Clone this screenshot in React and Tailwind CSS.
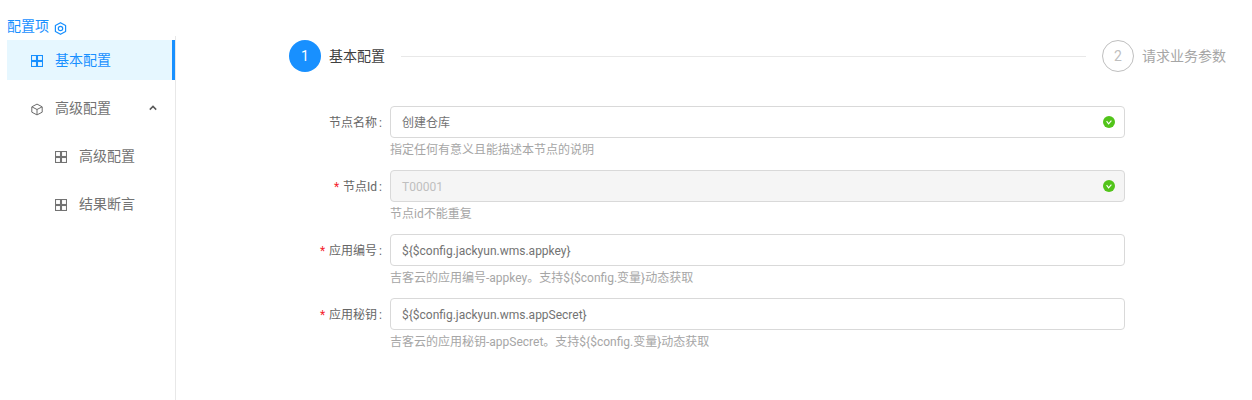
import React from "react";

const font = "font-['Roboto','Noto_Sans_CJK_SC',sans-serif]";

function GridIcon({ color = "#737373" }) {
  return (
    <svg width="12" height="12" viewBox="0 0 12 12" fill="none" stroke={color} strokeWidth="1.1">
      <rect x="0.5" y="0.5" width="5" height="5" />
      <rect x="6.5" y="0.5" width="5" height="5" />
      <rect x="0.5" y="6.5" width="5" height="5" />
      <rect x="6.5" y="6.5" width="5" height="5" />
    </svg>
  );
}

function CubeIcon() {
  return (
    <svg width="13" height="13" viewBox="0 0 12 12" fill="none" stroke="#6b6b6b" strokeWidth="1">
      <path d="M6 0.6 11.2 3.3V8.7L6 11.4 0.8 8.7V3.3Z" strokeLinejoin="round" />
      <path d="M1 3.4 6 6 11 3.4M6 6V11.2" />
    </svg>
  );
}

function CheckBadge() {
  return (
    <svg className="absolute right-[9px] top-[9px]" width="12" height="12" viewBox="0 0 12 12">
      <circle cx="6" cy="6" r="6" fill="#52c41a" />
      <path d="M3.6 5.2 5.6 7.8 8.4 4.6" fill="none" stroke="#fff" strokeWidth="1.1" />
    </svg>
  );
}

function MenuItem({ icon, label, active, indent, arrow }) {
  return (
    <div
      className={`relative flex h-10 items-center text-[14px] ${
        active ? "bg-[#e6f7ff] text-[#1890ff] border-r-[3px] border-[#1890ff]" : "text-[#737373]"
      } ${indent ? "pl-[48px]" : "pl-[24px]"}`}
    >
      <span className="mr-[12px] flex w-[12px] items-center pt-[2px]">{icon}</span>
      <span>{label}</span>
      {arrow && (
        <svg className="absolute right-[18px] top-[17px]" width="8" height="6" viewBox="0 0 8 6" fill="none" stroke="#595959" strokeWidth="1.5">
          <path d="M0.8 4.6 4 1.4 7.2 4.6" />
        </svg>
      )}
    </div>
  );
}

function FormRow({ label, required, value, help, disabled, ok }) {
  return (
    <div className="flex h-[64px]">
      <label className="flex h-[32px] w-[94px] items-center justify-end pt-[2px] text-[12px] text-[#666666]">
        {required && <span className="mr-[4px] text-[12px] text-[#f5222d]">*</span>}
        {label}
        <span className="ml-[2px] mr-[8px]">:</span>
      </label>
      <div className="w-[735px]">
        <div
          className={`relative flex h-[32px] items-center rounded-[4px] border border-[#d9d9d9] pl-[11px] pt-[2px] text-[12px] ${
            disabled ? "bg-[#f5f5f5] text-[#bfbfbf]" : "bg-white text-[#737373]"
          }`}
        >
          {value}
          {ok && <CheckBadge />}
        </div>
        <div className="mt-[4px] text-[12px] leading-[17px] text-[#a6a6a6]">{help}</div>
      </div>
    </div>
  );
}

export default function App() {
  return (
    <div className={`flex h-[400px] w-[1252px] overflow-hidden bg-white ${font}`}>
      {/* left menu */}
      <div className="w-[176px] shrink-0 pt-[17px]">
        <div className="flex h-[19px] items-center pl-[7px] text-[14px] text-[#1890ff]">
          配置项
          <svg className="ml-[5px] mt-[3px]" width="13" height="13" viewBox="0 0 13 13" fill="none" stroke="#1890ff" strokeWidth="1.2">
            <path d="M6.5 0.7 11.6 3.6V9.4L6.5 12.3 1.4 9.4V3.6Z" strokeLinejoin="round" />
            <circle cx="6.5" cy="6.5" r="2.2" />
          </svg>
        </div>
        <div className="ml-[7px] flex h-[364px] flex-col gap-[8px] border-r border-[#e8e8e8] pt-[4px]">
          <MenuItem active icon={<GridIcon color="#1890ff" />} label="基本配置" />
          <MenuItem icon={<CubeIcon />} label="高级配置" arrow />
          <MenuItem indent icon={<GridIcon />} label="高级配置" />
          <MenuItem indent icon={<GridIcon />} label="结果断言" />
        </div>
      </div>

      {/* content */}
      <div className="flex-1 pt-[40px]">
        {/* steps */}
        <div className="ml-[113px] flex h-[32px] w-[938px] items-center">
          <div className="flex h-8 w-8 items-center justify-center rounded-full bg-[#1890ff] text-[14px] text-white">1</div>
          <span className="ml-[8px] text-[14px] text-[#404040]">基本配置</span>
          <div className="mx-[16px] h-px flex-1 bg-[#e8e8e8]" />
          <div className="flex h-8 w-8 items-center justify-center rounded-full border border-[#bfbfbf] text-[14px] text-[#bfbfbf]">2</div>
          <span className="ml-[8px] mr-[1px] text-[14px] text-[#a6a6a6]">请求业务参数</span>
        </div>

        {/* form */}
        <div className="ml-[120px] mt-[34px]">
          <FormRow label="节点名称" value="创建仓库" help="指定任何有意义且能描述本节点的说明" ok />
          <FormRow label="节点Id" required value="T00001" help="节点id不能重复" disabled ok />
          <FormRow label="应用编号" required value="${$config.jackyun.wms.appkey}" help="吉客云的应用编号-appkey。支持${$config.变量}动态获取" />
          <FormRow label="应用秘钥" required value="${$config.jackyun.wms.appSecret}" help="吉客云的应用秘钥-appSecret。支持${$config.变量}动态获取" />
        </div>
      </div>
    </div>
  );
}
